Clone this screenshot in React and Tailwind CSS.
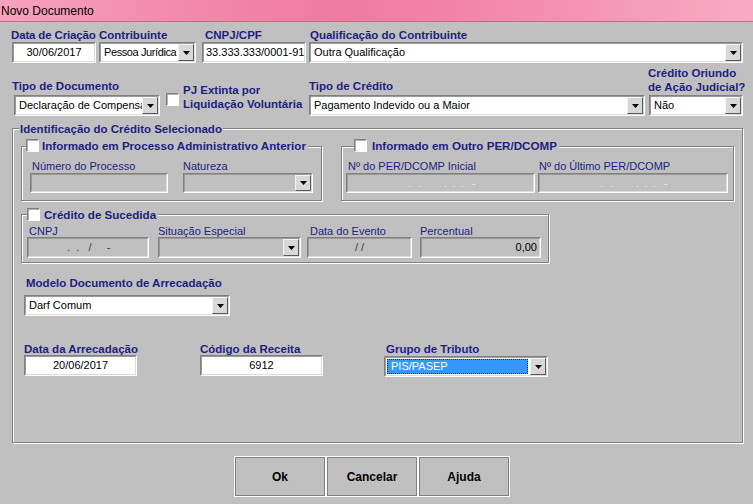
import React from "react";

const LB = "text-[11.5px] font-bold leading-[12px] text-[#1e1e82] whitespace-nowrap";
const LT = "text-[11.6px] font-bold leading-[12px] text-[#1e1e82] whitespace-nowrap";
const LB2 = "text-[11.5px] font-bold leading-[14px] text-[#1e1e82] whitespace-nowrap";
const LN = "text-[11px] leading-[12px] text-[#1e1e82] whitespace-nowrap";

function Sunken({ className = "", inner = "bg-white", children }) {
  return (
    <div className={"border border-t-[#808080] border-l-[#808080] border-r-white border-b-white " + className}>
      <div className={"h-full border border-t-[#9a9a9a] border-l-[#9a9a9a] border-r-[#dcdcdc] border-b-[#dcdcdc] flex items-center overflow-hidden " + inner}>
        {children}
      </div>
    </div>
  );
}

function Arrow() {
  return (
    <svg width="7" height="4" viewBox="0 0 7 4">
      <polygon points="0,0 7,0 3.5,4" fill="#000" />
    </svg>
  );
}

function DropBtn() {
  return (
    <div className="h-full w-[16px] shrink-0 border border-t-[#f4f4f4] border-l-[#f4f4f4] border-r-[#5a5a5a] border-b-[#5a5a5a] bg-[#d8d8d8] flex items-center justify-center">
      <Arrow />
    </div>
  );
}

function Select({ className = "", text = "", disabled = false, highlight = false, textClass = "pl-[3px]" }) {
  return (
    <Sunken className={className} inner={disabled ? "bg-[#c0c0c0]" : "bg-white"}>
      <div className="flex-1 min-w-0 h-full flex items-center overflow-hidden">
        {highlight ? (
          <div className="h-full w-full p-px pr-[2px]">
            <div className="h-full bg-[#3399ff] border border-dotted border-[#303030] flex items-center pl-[3px] text-white text-[11px]">
              {text}
            </div>
          </div>
        ) : (
          <span className={"text-[11px] text-black whitespace-nowrap " + textClass}>{text}</span>
        )}
      </div>
      <DropBtn />
    </Sunken>
  );
}

function Check() {
  return (
    <div className="w-[13px] h-[13px] shrink-0 bg-white border border-t-[#808080] border-l-[#808080] border-r-white border-b-white shadow-[inset_1px_1px_0_#b0b0b0]" />
  );
}

function Frame({ className = "", legend, legendClass = "", children }) {
  return (
    <div className={"relative border border-[#808080] shadow-[inset_1px_1px_0_#ffffff,1px_1px_0_#ffffff] " + className}>
      {legend && (
        <div className={"absolute flex items-center bg-[#c0c0c0] " + legendClass}>{legend}</div>
      )}
      {children}
    </div>
  );
}

function Btn({ children }) {
  return (
    <div className="w-[92px] h-[41px] border border-white">
      <div className="h-full border border-[#808080] flex items-center justify-center text-[12px] font-bold text-black">
        {children}
      </div>
    </div>
  );
}

export default function App() {
  return (
    <div className="w-[753px] h-[504px] overflow-hidden bg-[#c0c0c0] font-['Liberation_Sans',Arial,sans-serif] flex flex-col">
      {/* Title bar */}
      <div className="h-[22px] shrink-0 border-b border-[#b8718c] bg-[linear-gradient(90deg,#f7a2be_0%,#f28bae_22%,#ef7aa2_45%,#f285aa_62%,#f597b6_80%,#f8abc4_100%)] flex items-center pl-px text-[12px] text-black">
        Novo Documento
      </div>

      {/* Row 1 */}
      <div className="flex items-end mt-[7px] pl-[12px]">
        <div className="flex flex-col w-[84px]">
          <span className={LB + " -ml-px mb-px tracking-[-0.15px]"}>Data de Criação</span>
          <Sunken className="h-[21px]">
            <span className="flex-1 text-center text-[11px] text-black">30/06/2017</span>
          </Sunken>
        </div>
        <div className="flex flex-col w-[97px] ml-[3px]">
          <span className={LB + " mb-px"}>Contribuinte</span>
          <Select className="h-[21px]" text="Pessoa Jurídica" textClass="pl-[3px] tracking-[-0.4px]" />
        </div>
        <div className="flex flex-col w-[104px] ml-[6px]">
          <span className={LB + " pl-[3px] mb-px"}>CNPJ/CPF</span>
          <Sunken className="h-[21px]">
            <span className="pl-[2px] text-[11px] text-black whitespace-nowrap">33.333.333/0001-91</span>
          </Sunken>
        </div>
        <div className="flex flex-col w-[434px] ml-[3px]">
          <span className={LB + " pl-px mb-px"}>Qualificação do Contribuinte</span>
          <Select className="h-[21px]" text="Outra Qualificação" />
        </div>
      </div>

      {/* Row 2 */}
      <div className="flex items-end h-[50px] mt-[3px] pl-[14px]">
        <div className="flex flex-col w-[146px]">
          <span className={LB + " -ml-[2px] mb-[3px]"}>Tipo de Documento</span>
          <Select className="h-[21px]" text="Declaração de Compensação" />
        </div>
        <div className="self-start mt-[17px] ml-[6px] w-[143px] flex">
          <div className="mt-[10px]">
            <Check />
          </div>
          <div className={LB2 + " ml-[4px]"}>
            PJ Extinta por
            <br />
            Liquidação Voluntária
          </div>
        </div>
        <div className="flex flex-col w-[336px]">
          <span className={LB + " mb-[3px]"}>Tipo de Crédito</span>
          <Select className="h-[21px]" text="Pagamento Indevido ou a Maior" />
        </div>
        <div className="flex flex-col w-[94px] ml-[4px]">
          <span className={LB2 + " -ml-px mb-px"}>
            Crédito Oriundo
            <br />
            de Ação Judicial?
          </span>
          <Select className="h-[21px]" text="Não" />
        </div>
      </div>

      {/* Main group */}
      <Frame
        className="mt-[12px] ml-[12px] w-[731px] h-[315px] shrink-0 pl-[8px] pt-[17px] flex flex-col"
        legendClass="left-[6px] top-[-6px] px-px"
        legend={<span className={LB}>Identificação do Crédito Selecionado</span>}
      >
        {/* inner row 1 */}
        <div className="flex">
          <Frame
            className="w-[301px] h-[55px] pl-[8px] pt-[13px] flex"
            legendClass="left-[4px] top-[-8px] pr-[2px]"
            legend={
              <>
                <Check />
                <span className={LT + " ml-[3px]"}>Informado em Processo Administrativo Anterior</span>
              </>
            }
          >
            <div className="flex flex-col w-[138px]">
              <span className={LN + " pl-[2px] mb-px"}>Número do Processo</span>
              <Sunken className="h-[20px]" inner="bg-[#c0c0c0]" />
            </div>
            <div className="flex flex-col w-[130px] ml-[15px]">
              <span className={LN + " mb-px"}>Natureza</span>
              <Select className="h-[20px]" disabled />
            </div>
          </Frame>
          <Frame
            className="ml-[19px] w-[393px] h-[55px] pl-[4px] pt-[13px] flex"
            legendClass="left-[12px] top-[-8px] pr-[2px]"
            legend={
              <>
                <Check />
                <span className={LT + " ml-[5px]"}>Informado em Outro PER/DCOMP</span>
              </>
            }
          >
            <div className="flex flex-col w-[189px]">
              <span className={LN + " pl-[2px] mb-px"}>Nº do PER/DCOMP Inicial</span>
              <Sunken className="h-[20px]" inner="bg-[#c0c0c0]">
                <span className="pl-[60px] text-[10px] text-[#ececec] whitespace-pre">.   .        .  .  .   -</span>
              </Sunken>
            </div>
            <div className="flex flex-col w-[190px] ml-[3px]">
              <span className={LN + " pl-px mb-px"}>Nº do Último PER/DCOMP</span>
              <Sunken className="h-[20px]" inner="bg-[#c0c0c0]">
                <span className="pl-[60px] text-[10px] text-[#ececec] whitespace-pre">.   .        .  .  .   -</span>
              </Sunken>
            </div>
          </Frame>
        </div>

        {/* inner row 2 */}
        <Frame
          className="mt-[13px] w-[528px] h-[49px] shrink-0 pl-[5px] pt-[10px] flex"
          legendClass="left-[5px] top-[-7px] pr-[2px]"
          legend={
            <>
              <Check />
              <span className={LT + " ml-[4px]"}>Crédito de Sucedida</span>
            </>
          }
        >
          <div className="flex flex-col w-[122px]">
            <span className={LN + " pl-[2px]"}>CNPJ</span>
            <Sunken className="h-[21px]" inner="bg-[#c0c0c0]">
              <span className="pl-[38px] text-[11px] text-[#404040] whitespace-pre">.  .   /     -</span>
            </Sunken>
          </div>
          <div className="flex flex-col w-[143px] ml-[9px]">
            <span className={LN}>Situação Especial</span>
            <Select className="h-[21px]" disabled />
          </div>
          <div className="flex flex-col w-[105px] ml-[6px]">
            <span className={LN + " pl-[3px]"}>Data do Evento</span>
            <Sunken className="h-[21px]" inner="bg-[#c0c0c0]">
              <span className="flex-1 text-center text-[11px] text-[#404040] whitespace-pre">/ /</span>
            </Sunken>
          </div>
          <div className="flex flex-col w-[121px] ml-[8px]">
            <span className={LN}>Percentual</span>
            <Sunken className="h-[21px]" inner="bg-[#c0c0c0]">
              <span className="flex-1 text-right pr-[2px] text-[11px] text-black">0,00</span>
            </Sunken>
          </div>
        </Frame>

        {/* Modelo */}
        <div className="flex flex-col mt-[14px] ml-[3px] w-[206px]">
          <span className={LB + " pl-[2px] mb-[6px]"}>Modelo Documento de Arrecadação</span>
          <Select className="h-[21px]" text="Darf Comum" />
        </div>

        {/* Data row */}
        <div className="flex items-start mt-[27px] ml-[3px]">
          <div className="flex flex-col w-[113px]">
            <span className={LB}>Data da Arrecadação</span>
            <Sunken className="h-[21px]">
              <span className="flex-1 text-center text-[11px] text-black">20/06/2017</span>
            </Sunken>
          </div>
          <div className="flex flex-col w-[123px] ml-[63px]">
            <span className={LB}>Código da Receita</span>
            <Sunken className="h-[21px]">
              <span className="flex-1 text-center text-[11px] text-black">6912</span>
            </Sunken>
          </div>
          <div className="flex flex-col w-[164px] ml-[61px]">
            <span className={LB + " pl-[2px] mb-px"}>Grupo de Tributo</span>
            <Select className="h-[21px]" text="PIS/PASEP" highlight />
          </div>
        </div>
      </Frame>

      {/* Buttons */}
      <div className="flex mt-[13px] ml-[234px]">
        <Btn>Ok</Btn>
        <Btn>Cancelar</Btn>
        <Btn>Ajuda</Btn>
      </div>
    </div>
  );
}
